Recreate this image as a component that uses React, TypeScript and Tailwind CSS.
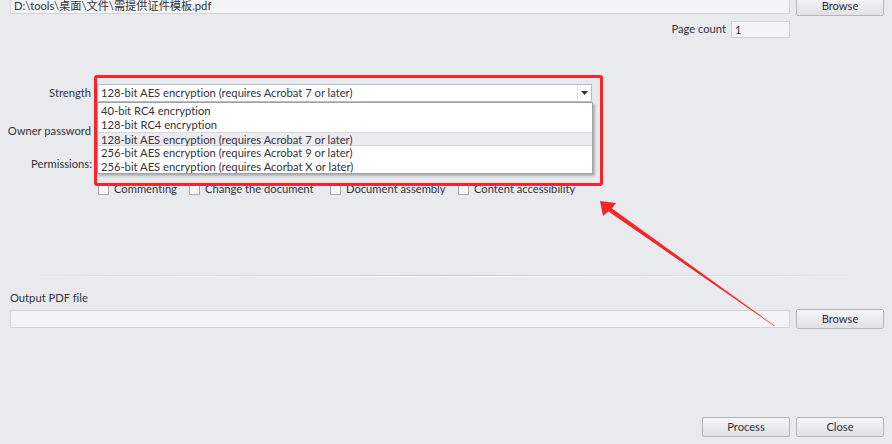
import React from 'react';

const font = { fontFamily: 'Lato, "Noto Sans CJK SC", sans-serif' };

const Btn: React.FC<{ label: string; className?: string }> = ({ label, className = '' }) => (
  <button
    className={`w-[88px] h-[20px] rounded-[2px] border border-[#b4b6bb] bg-gradient-to-b from-[#f6f6f8] to-[#e1e2e6] text-[11.2px] text-[#2e3040] ${className}`}
  >
    {label}
  </button>
);

const Check: React.FC<{ label?: string; w?: string }> = ({ label, w = '' }) => (
  <label className={`flex items-center gap-[5px] ${w}`}>
    <span className="w-[11px] h-[11px] border border-[#a9abb0] bg-[#f7f7f9]" />
    {label && <span>{label}</span>}
  </label>
);

const options = [
  '40-bit RC4 encryption',
  '128-bit RC4 encryption',
  '128-bit AES encryption (requires Acrobat 7 or later)',
  '256-bit AES encryption (requires Acrobat 9 or later)',
  '256-bit AES encryption (requires Acorbat X or later)',
];

export default function App() {
  return (
    <div
      className="relative w-[892px] h-[444px] overflow-hidden bg-[#e9eaee] text-[11.2px] text-[#33343f] flex flex-col [font-variant-ligatures:none]"
      style={font}
    >
      {/* input file */}
      <div className="flex items-start pl-[10px] -mt-[4px]">
        <div className="w-[780px] h-[18px] border border-[#d3d4d8] bg-[#f4f4f6] pl-[3px] flex items-end pb-[0px] leading-[14px]">
          D:\tools\桌面\文件\需提供证件模板.pdf
        </div>
        <Btn label="Browse" className="ml-[6px]" />
      </div>

      <div className="flex justify-end items-center pr-[102px] mt-[5px]">
        <span className="mr-[5px]">Page count</span>
        <div className="w-[59px] h-[17px] border border-[#d3d4d8] bg-[#f4f4f6] pl-[3px] leading-[15px]">1</div>
      </div>

      {/* security form */}
      <div className="mt-[46px] flex flex-col">
        <div className="flex items-center h-[18px]">
          <span className="w-[91px] text-right">Strength</span>
          <div className="relative ml-[6px] w-[495px] h-[18px] border border-[#b9bbc0] bg-white flex items-center">
            <span className="pl-[3px] flex-1">128-bit AES encryption (requires Acrobat 7 or later)</span>
            <span className="w-[14px] h-full flex items-center justify-center border-l border-[#e2e3e6]">
              <svg width="7" height="4" viewBox="0 0 7 4"><path d="M0 0h7L3.5 4z" fill="#333" /></svg>
            </span>
            <div className="absolute left-[-1px] top-[17px] w-[496px] h-[72px] border border-[#9fa1a6] bg-white py-[1px] shadow-[2px_2px_2px_rgba(0,0,0,0.25)] z-10">
              {options.map((o, i) => (
                <div
                  key={o}
                  className={`h-[14px] leading-[14px] pl-[3px] ${i === 2 ? 'bg-[#ececee] border-y border-[#d6d7da] leading-[12px]' : ''}`}
                >
                  {o}
                </div>
              ))}
            </div>
          </div>
        </div>

        <div className="flex items-center h-[18px] mt-[20px]">
          <span className="w-[91px] text-right">Owner password</span>
          <div className="ml-[6px] w-[495px] h-[18px] border border-[#d3d4d8] bg-[#f4f4f6]" />
        </div>

        <div className="flex items-center h-[16px] mt-[16px]">
          <span className="w-[92px] text-right">Permissions:</span>
          <div className="ml-[6px] flex">
            <Check w="w-[91px]" />
            <Check w="w-[141px]" />
            <Check w="w-[128px]" />
          </div>
        </div>

        <div className="flex items-center h-[12px] mt-[11px] pl-[98px]">
          <Check label="Commenting" w="w-[91px]" />
          <Check label="Change the document" w="w-[141px]" />
          <Check label="Document assembly" w="w-[128px]" />
          <Check label="Content accessibility" />
        </div>
      </div>

      {/* separator */}
      <div className="mt-[80px] mx-[10px]">
        <div className="h-px bg-gradient-to-r from-transparent via-[#c6c7cc] to-transparent" />
        <div className="h-px bg-gradient-to-r from-transparent via-white to-transparent" />
      </div>

      <div className="mt-[14px] pl-[10px] leading-[14px]">Output PDF file</div>
      <div className="flex items-start pl-[10px] mt-[4px]">
        <div className="w-[780px] h-[18px] mt-[1px] border border-[#d3d4d8] bg-[#f4f4f6]" />
        <Btn label="Browse" className="ml-[6px]" />
      </div>

      <div className="mt-auto mb-[7px] flex justify-end pr-[8px] gap-[6px]">
        <Btn label="Process" />
        <Btn label="Close" />
      </div>

      {/* annotation */}
      <div className="absolute left-[94px] top-[75px] w-[509px] h-[111px] border-[3px] border-[#f5262a] rounded-[3px] z-20 pointer-events-none" />
      <svg className="absolute inset-0 z-20 pointer-events-none" width="892" height="444" viewBox="0 0 892 444">
        <polygon
          points="775,326 612,208.5 616,203 600,201 603,216 608.5,211.5 774,326"
          fill="#f5262a"
        />
      </svg>
    </div>
  );
}
